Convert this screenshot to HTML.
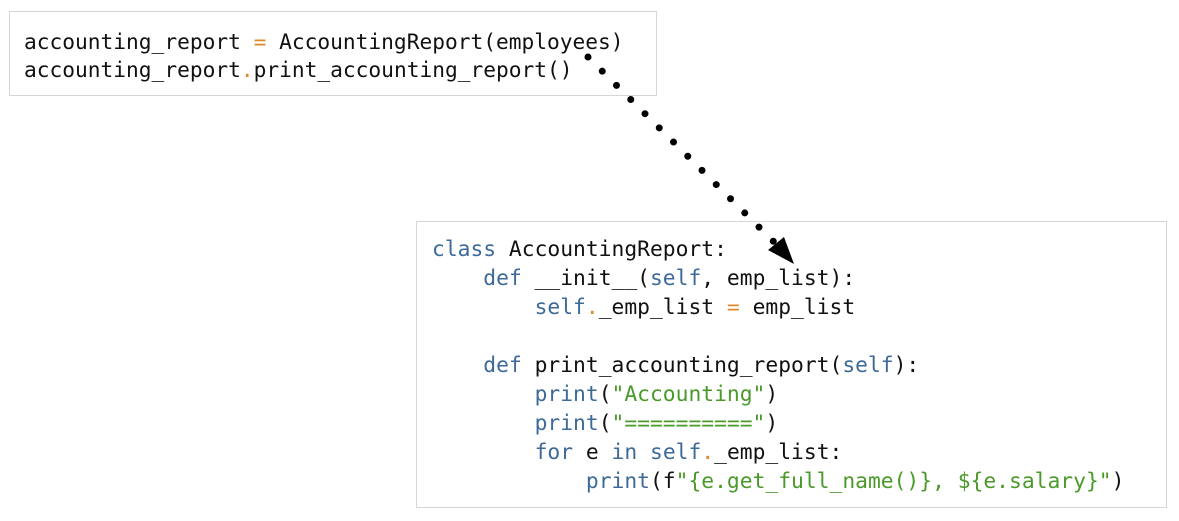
<!DOCTYPE html>
<html><head><style>
body{margin:0;width:1179px;height:521px;background:#fff;position:relative;overflow:hidden}
.box{position:absolute;border:1.5px solid #d6d6d6;background:#fff;box-sizing:border-box}
pre{margin:0;font-family:"DejaVu Sans Mono","Liberation Mono",monospace;color:#111;white-space:pre}
.k{color:#3d6a98}.o{color:#e0892a}.s{color:#4a9a2a}
</style></head><body>
<div class="box" style="left:9px;top:11px;width:648px;height:85px">
<pre style="position:absolute;left:14px;top:16px;font-size:21.2px;line-height:28px">accounting_report <span class="o">=</span> AccountingReport(employees)
accounting_report<span class="o">.</span>print_accounting_report()</pre>
</div>
<div class="box" style="left:416px;top:221px;width:751px;height:287px">
<pre style="position:absolute;left:15px;top:13px;font-size:21.3px;line-height:29px"><span class="k">class</span> AccountingReport:
    <span class="k">def</span> __init__(<span class="k">self</span>, emp_list):
        <span class="k">self</span><span class="o">.</span>_emp_list <span class="o">=</span> emp_list

    <span class="k">def</span> print_accounting_report(<span class="k">self</span>):
        <span class="k">print</span>(<span class="s">"Accounting"</span>)
        <span class="k">print</span>(<span class="s">"=========="</span>)
        <span class="k">for</span> e <span class="k">in</span> <span class="k">self</span><span class="o">.</span>_emp_list:
            <span class="k">print</span>(f<span class="s">"{e.get_full_name()}, ${e.salary}"</span>)</pre>
</div>
<svg width="1179" height="521" style="position:absolute;left:0;top:0">
<line x1="588" y1="57" x2="774" y2="242" stroke="#000" stroke-width="7" stroke-linecap="round" stroke-dasharray="0 20.1"/>
<polygon points="768,250 784,237 794,264" fill="#000"/>
</svg>
</body></html>
